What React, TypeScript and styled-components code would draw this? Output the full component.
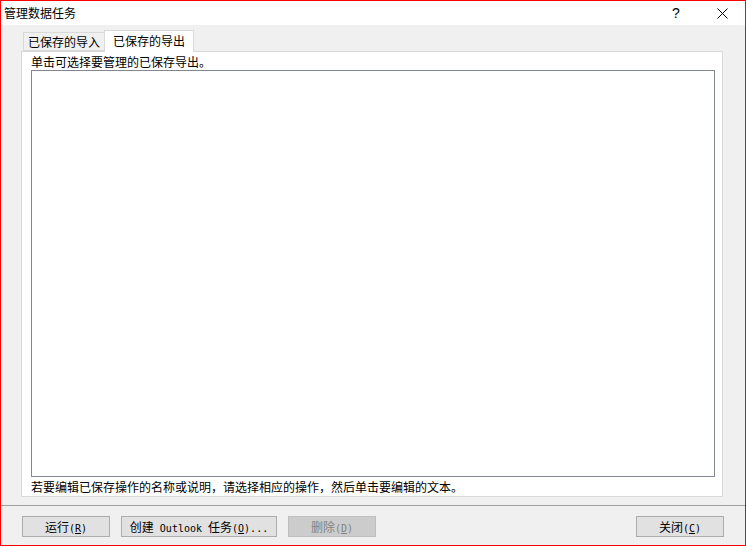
import React from "react";
import styled, { createGlobalStyle } from "styled-components";

const Global = createGlobalStyle`
  html, body { margin: 0; padding: 0; background: #ffffff; }
  body { font-family: "Noto Sans CJK SC", "Noto Sans", sans-serif; }
  * { box-sizing: border-box; }
`;

const Window = styled.div`
  width: 746px;
  height: 546px;
  border: 1px solid #ff0000;
  display: flex;
  flex-direction: column;
  background: #f0f0f0;
  overflow: hidden;
`;

const TitleBar = styled.div`
  height: 24px;
  background: #ffffff;
  display: flex;
  align-items: center;
  padding-left: 3px;
  font-size: 12px;
  color: #000;
`;

const Title = styled.span`
  flex: 1;
  line-height: 24px;
`;

const TitleButton = styled.div<{ $w: number }>`
  width: ${(p) => p.$w}px;
  height: 24px;
  display: flex;
  align-items: center;
  justify-content: center;
  font-family: "Liberation Sans", sans-serif;
  font-size: 14px;
`;

const Body = styled.div`
  flex: 1;
  display: flex;
  flex-direction: column;
  padding: 5px 22px 0 20px;
`;

const TabRow = styled.div`
  display: flex;
  align-items: flex-end;
  height: 21px;
  padding-left: 2px;
  position: relative;
  z-index: 1;
`;

const Tab = styled.div<{ $active?: boolean }>`
  height: ${(p) => (p.$active ? 22 : 19)}px;
  margin-bottom: ${(p) => (p.$active ? -1 : 0)}px;
  padding: 0 ${(p) => (p.$active ? 8 : 4)}px;
  background: ${(p) => (p.$active ? "#ffffff" : "#f0f0f0")};
  border: 1px solid #d9d9d9;
  border-bottom: ${(p) => (p.$active ? "none" : "1px solid #d9d9d9")};
  border-right: ${(p) => (p.$active ? "1px solid #d9d9d9" : "none")};
  font-size: 12px;
  line-height: ${(p) => (p.$active ? 19 : 17)}px;
  color: #000;
  white-space: nowrap;
`;

const Panel = styled.div`
  height: 446px;
  background: #ffffff;
  border: 1px solid #d9d9d9;
  display: flex;
  flex-direction: column;
  padding: 0 7px 0 9px;
`;

const Label = styled.div`
  height: 18px;
  font-size: 12px;
  line-height: 20px;
  color: #000;
  white-space: nowrap;
`;

const ListBox = styled.div`
  height: 408px;
  border: 1px solid #828790;
  background: #ffffff;
`;

const Hint = styled.div`
  font-size: 12px;
  line-height: 19px;
  color: #000;
  white-space: nowrap;
`;

const Separator = styled.div`
  height: 1px;
  background: #a0a0a0;
  margin: 8px -22px 0 -20px;
`;

const ButtonRow = styled.div`
  display: flex;
  align-items: center;
  gap: 11px;
  padding: 10px 0 0 1px;
  margin-right: -1px;
`;

const Spacer = styled.div`
  flex: 1;
`;

const Button = styled.div<{ $w?: number; $disabled?: boolean }>`
  width: ${(p) => p.$w ?? 88}px;
  height: 21px;
  background: ${(p) => (p.$disabled ? "#cccccc" : "#e1e1e1")};
  border: 1px solid ${(p) => (p.$disabled ? "#bfbfbf" : "#adadad")};
  display: flex;
  align-items: center;
  justify-content: center;
  font-size: 12px;
  color: ${(p) => (p.$disabled ? "#838383" : "#000000")};
  white-space: pre;
`;

const ButtonText = styled.span`
  white-space: pre;
`;

const Mono = styled.span`
  font-family: "DejaVu Sans Mono", "Liberation Mono", monospace;
  font-size: 10px;
`;

const Key = styled.span`
  text-decoration: underline;
`;

const CloseIcon = () => (
  <svg width="11" height="11" viewBox="0 0 11 11">
    <path d="M0.5 0.5 L10.5 10.5 M10.5 0.5 L0.5 10.5" stroke="#000" strokeWidth="1" />
  </svg>
);

export default function App() {
  return (
    <>
      <Global />
      <Window>
        <TitleBar>
          <Title>管理数据任务</Title>
          <TitleButton $w={46}>?</TitleButton>
          <TitleButton $w={46}>
            <CloseIcon />
          </TitleButton>
        </TitleBar>
        <Body>
          <TabRow>
            <Tab>已保存的导入</Tab>
            <Tab $active>已保存的导出</Tab>
          </TabRow>
          <Panel>
            <Label>单击可选择要管理的已保存导出。</Label>
            <ListBox />
            <Hint>若要编辑已保存操作的名称或说明，请选择相应的操作，然后单击要编辑的文本。</Hint>
          </Panel>
          <Separator />
          <ButtonRow>
            <Button>
              <ButtonText>
                运行<Mono>(<Key>R</Key>)</Mono>
              </ButtonText>
            </Button>
            <Button $w={156}>
              <ButtonText>
                创建<Mono> Outlook </Mono>任务<Mono>(<Key>O</Key>)...</Mono>
              </ButtonText>
            </Button>
            <Button $disabled>
              <ButtonText>
                删除<Mono>(<Key>D</Key>)</Mono>
              </ButtonText>
            </Button>
            <Spacer />
            <Button>
              <ButtonText>
                关闭<Mono>(<Key>C</Key>)</Mono>
              </ButtonText>
            </Button>
          </ButtonRow>
        </Body>
      </Window>
    </>
  );
}
